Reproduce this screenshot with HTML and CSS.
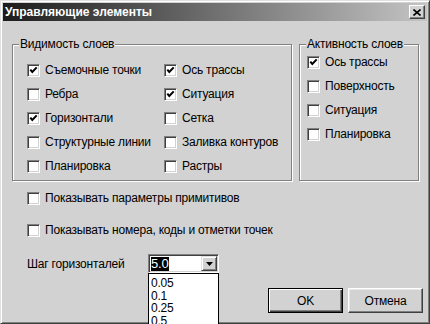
FILE: index.html
```html
<!DOCTYPE html>
<html lang="ru">
<head>
    <meta charset="UTF-8">
    <title>Управляющие элементы</title>
    <link rel="stylesheet" href="styles.css">
</head>
<body>
    <div class="window">
        <div class="titlebar">
            <span class="title">Управляющие элементы</span>
            <span class="close">
                <svg width="8" height="7" viewBox="0 0 8 7"><path d="M0.5 0.5 L7.5 6.5 M7.5 0.5 L0.5 6.5" stroke="#000" stroke-width="1.6" fill="none"/></svg>
            </span>
        </div>
        <div class="client">
            <div class="groups">
                <div class="group group-vis">
                    <span class="legend">Видимость слоев</span>
                    <div class="grid">
                        <label class="check"><span class="box on"></span>Съемочные точки</label>
                        <label class="check"><span class="box on"></span>Ось трассы</label>
                        <label class="check"><span class="box"></span>Ребра</label>
                        <label class="check"><span class="box on"></span>Ситуация</label>
                        <label class="check"><span class="box on"></span>Горизонтали</label>
                        <label class="check"><span class="box"></span>Сетка</label>
                        <label class="check"><span class="box"></span>Структурные линии</label>
                        <label class="check"><span class="box"></span>Заливка контуров</label>
                        <label class="check"><span class="box"></span>Планировка</label>
                        <label class="check"><span class="box"></span>Растры</label>
                    </div>
                </div>
                <div class="group group-act">
                    <span class="legend">Активность слоев</span>
                    <label class="check"><span class="box on"></span>Ось трассы</label>
                    <label class="check"><span class="box"></span>Поверхность</label>
                    <label class="check"><span class="box"></span>Ситуация</label>
                    <label class="check"><span class="box"></span>Планировка</label>
                </div>
            </div>
            <label class="check opt"><span class="box"></span>Показывать параметры примитивов</label>
            <label class="check opt"><span class="box"></span>Показывать номера, коды и отметки точек</label>
            <div class="bottom">
                <div class="step">
                    <span class="step-label">Шаг горизонталей</span>
                    <div class="combo">
                        <span class="field"><span class="sel">5.0</span></span>
                        <span class="arrow"><svg width="7" height="4" viewBox="0 0 7 4"><path d="M0 0 H7 L3.5 4 Z" fill="#000"/></svg></span>
                        <ul class="list">
                            <li>0.05</li>
                            <li>0.1</li>
                            <li>0.25</li>
                            <li>0.5</li>
                        </ul>
                    </div>
                </div>
                <div class="buttons">
                    <span class="btn default">OK</span>
                    <span class="btn">Отмена</span>
                </div>
            </div>
        </div>
    </div>
</body>
</html>
```

FILE: styles.css
```css
body {
    margin: 0;
    font-family: "Liberation Sans", Arial, sans-serif;
    font-size: 12px;
    letter-spacing: -0.2px;
    color: #000;
}
.window {
    width: 430px;
    height: 324px;
    box-sizing: border-box;
    background: #d2d2d2;
    border: 1px solid;
    border-color: #e0e0e0 #404040 #404040 #e0e0e0;
    box-shadow: inset 1px 1px 0 #fff, inset -1px -1px 0 #808080;
    padding: 2px;
    position: relative;
}
.titlebar {
    height: 18px;
    display: flex;
    align-items: center;
    justify-content: space-between;
    padding: 0 2px 0 2px;
    background: linear-gradient(to right, #1c1c1c, #c4c4c4);
}
.title {
    color: #fff;
    font-weight: bold;
    font-size: 12px;
    letter-spacing: 0;
}
.close {
    width: 16px;
    height: 14px;
    box-sizing: border-box;
    background: #d2d2d2;
    border: 1px solid;
    border-color: #fff #404040 #404040 #fff;
    box-shadow: inset -1px -1px 0 #808080;
    display: flex;
    align-items: center;
    justify-content: center;
}
.close svg {
    display: block;
}
.groups {
    display: flex;
    gap: 7px;
    margin: 23px 0 0 9px;
}
.group {
    position: relative;
    border: 1px solid #808080;
    box-shadow: 1px 1px 0 #fff, inset 1px 1px 0 #fff;
    height: 137px;
    box-sizing: border-box;
}
.group-vis {
    width: 280px;
    padding: 13px 0 0 14px;
}
.group-act {
    width: 120px;
    padding: 5px 0 0 7px;
}
.legend {
    position: absolute;
    top: -8px;
    left: 6px;
    padding: 0 1px;
    line-height: 15px;
    background: #d2d2d2;
}
.grid {
    display: grid;
    grid-template-columns: 137px auto;
}
.check {
    display: flex;
    align-items: center;
    height: 24px;
    white-space: nowrap;
}
.box {
    width: 13px;
    height: 13px;
    box-sizing: border-box;
    margin-right: 5px;
    background: #fff;
    border: 1px solid;
    border-color: #808080 #fff #fff #808080;
    box-shadow: inset 1px 1px 0 #404040, inset -1px -1px 0 #d2d2d2;
    flex-shrink: 0;
}
.box.on {
    background: #fff url("data:image/svg+xml,%3Csvg xmlns='http://www.w3.org/2000/svg' width='11' height='11'%3E%3Cpath d='M2.3 4.6 L4.3 7 L8.7 2.4' stroke='%23000' stroke-width='2' fill='none'/%3E%3C/svg%3E") no-repeat;
}
.opt {
    margin-left: 24px;
}
.opt:first-of-type {
    margin-top: 5px;
}
.opt + .opt {
    margin-top: 8px;
}
.bottom {
    display: flex;
    margin-top: 12px;
}
.step {
    display: flex;
    align-items: center;
    height: 19px;
    margin-left: 24px;
}
.step-label {
    width: 121px;
}
.combo {
    position: relative;
    width: 71px;
    height: 19px;
    box-sizing: border-box;
    background: #fff;
    border: 1px solid;
    border-color: #808080 #fff #fff #808080;
    box-shadow: inset 1px 1px 0 #404040, inset -1px -1px 0 #d2d2d2;
    padding: 1px;
    display: flex;
    font-size: 13px;
}
.field {
    flex: 1;
    display: flex;
    align-items: center;
    padding-left: 1px;
}
.sel {
    background: #000;
    color: #fff;
    line-height: 14px;
    padding: 0 1px 0 0;
}
.arrow {
    width: 16px;
    box-sizing: border-box;
    background: #d2d2d2;
    border: 1px solid;
    border-color: #e0e0e0 #404040 #404040 #e0e0e0;
    box-shadow: inset 1px 1px 0 #fff, inset -1px -1px 0 #808080;
    display: flex;
    align-items: center;
    justify-content: center;
}
.arrow svg {
    display: block;
}
.list {
    position: absolute;
    top: 18px;
    left: -1px;
    width: 71px;
    height: 60px;
    box-sizing: border-box;
    margin: 0;
    padding: 3px 0 0 2px;
    list-style: none;
    background: #fff;
    border: 1px solid #000;
    overflow: hidden;
    font-size: 12px;
}
.list li {
    line-height: 12.5px;
}
.buttons {
    display: flex;
    gap: 5px;
    margin: 34px 4px 0 auto;
}
.btn {
    width: 75px;
    height: 25px;
    box-sizing: border-box;
    display: flex;
    align-items: center;
    justify-content: center;
    border: 1px solid;
    border-color: #fff #404040 #404040 #fff;
    box-shadow: inset -1px -1px 0 #808080, inset 1px 1px 0 #e8e8e8;
}
.btn.default {
    border: 1px solid #000;
    box-shadow: inset 1px 1px 0 #fff, inset -1px -1px 0 #404040, inset -2px -2px 0 #808080;
}
```
